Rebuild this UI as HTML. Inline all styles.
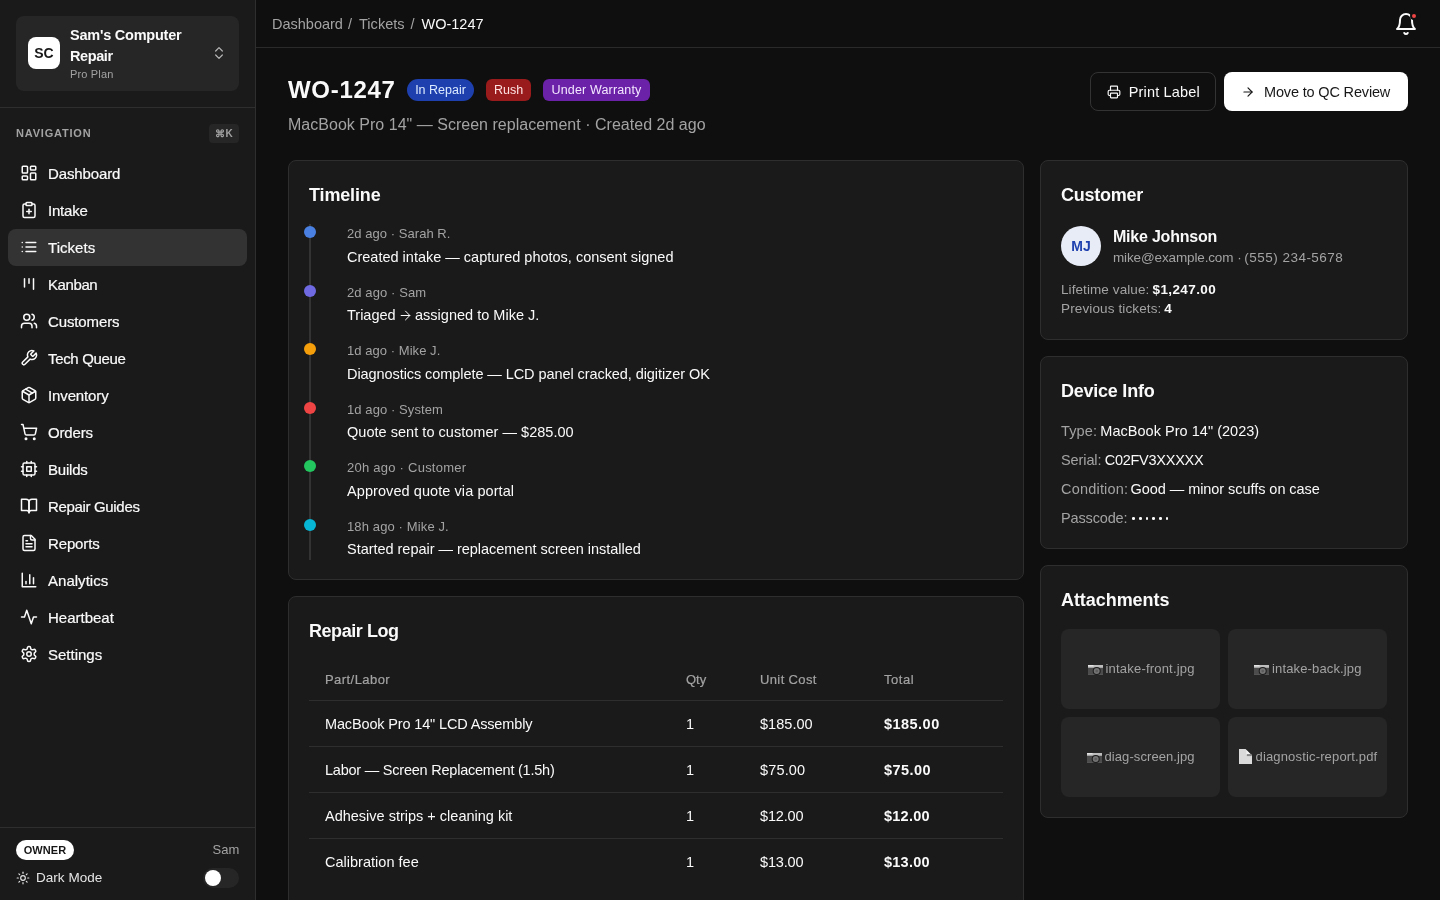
<!DOCTYPE html>
<html lang="en">
<head>
<meta charset="utf-8">
<title>WO-1247</title>
<style>
*{box-sizing:border-box;margin:0;padding:0}
html,body{width:1440px;height:900px;overflow:hidden;background:#0f0f0f;color:#fafafa;
  font-family:"Liberation Sans",sans-serif}
body{position:relative;will-change:transform}
svg{display:block;fill:none;stroke:currentColor;stroke-width:2;stroke-linecap:round;stroke-linejoin:round}
.t{position:absolute;white-space:pre;line-height:20px}
.box{position:absolute}
.ic{position:absolute}
/* colours */
.mu{color:#a3a3a3}
.fg{color:#fafafa}
/* sidebar */
#sb{left:0;top:0;width:256px;height:900px;background:#1a1a1a;border-right:1px solid #2e2e2e}
#org{left:16px;top:16px;width:223px;height:75px;background:#262626;border-radius:8px}
#logo{left:28px;top:37px;width:32px;height:32px;background:#fff;border-radius:8px}
.hl{height:1px;background:#2e2e2e}
#kbd{left:209px;top:124px;width:30px;height:19px;border-radius:4px;background:#262626}
#navon{left:8px;top:229px;width:239px;height:37px;border-radius:8px;background:#333}
#owner{left:16px;top:840px;width:58px;height:20px;border-radius:10px;background:#fff}
#tog{left:203px;top:868px;width:36px;height:20px;border-radius:10px;background:#262626}
#knob{left:205px;top:870px;width:16px;height:16px;border-radius:8px;background:#fff}
/* top */
#topline{left:256px;top:47px;width:1184px;height:1px;background:#2a2a2a}
#belldot{left:1410.2px;top:11.8px;width:8px;height:8px;border-radius:4px;background:#ef4444;border:2px solid #0f0f0f}
.bdg{top:79px;height:22px;border-radius:6px}
#btn1{left:1090px;top:72px;width:125.5px;height:38.5px;border:1px solid #333;border-radius:8px}
#btn2{left:1224px;top:72px;width:184px;height:38.5px;border-radius:8px;background:#fff}
/* cards */
.card{background:#1a1a1a;border:1px solid #2e2e2e;border-radius:8px}
.dot{width:12px;height:12px;border-radius:6px;left:304px}
#av{left:1061px;top:226px;width:40px;height:40px;border-radius:20px;background:#e8ecf6}
.tile{width:159px;height:80px;border-radius:8px;background:#262626}
.pd{width:2.6px;height:2.6px;border-radius:50%;background:#fafafa;top:517.3px}
/* text classes */
.nav{font-size:15px;line-height:37px;color:#fafafa;-webkit-text-stroke:.2px #fafafa}
.md{-webkit-text-stroke:.2px currentColor}
.h1{font-size:24px;font-weight:700;line-height:36px}
.ct{font-size:18px;font-weight:700;line-height:24px}
.b{font-weight:700}
</style>
</head>
<body>
<div class="box" id="sb"></div>
<div class="box" id="org"></div><div class="box" id="logo"></div>
<svg class="ic" style="left:211px;top:45px;width:16px;height:16px;color:#b8b8b8;stroke-width:1.8" viewBox="0 0 24 24"><path d="m7 15 5 5 5-5"/><path d="m7 9 5-5 5 5"/></svg>
<div class="box hl" style="left:0;top:107px;width:255px"></div>
<div class="box" id="kbd"></div>
<div class="box" id="navon"></div>
<svg class="ic" style="left:20px;top:164px;width:18px;height:18px;color:#fafafa;stroke-width:2" viewBox="0 0 24 24"><rect width="7" height="9" x="3" y="3" rx="1"/><rect width="7" height="5" x="14" y="3" rx="1"/><rect width="7" height="9" x="14" y="12" rx="1"/><rect width="7" height="5" x="3" y="16" rx="1"/></svg>
<svg class="ic" style="left:20px;top:201px;width:18px;height:18px;color:#fafafa;stroke-width:2" viewBox="0 0 24 24"><rect width="8" height="4" x="8" y="2" rx="1" ry="1"/><path d="M16 4h2a2 2 0 0 1 2 2v14a2 2 0 0 1-2 2H6a2 2 0 0 1-2-2V6a2 2 0 0 1 2-2h2"/><path d="M9 14h6"/><path d="M12 17v-6"/></svg>
<svg class="ic" style="left:20px;top:238px;width:18px;height:18px;color:#fafafa;stroke-width:2" viewBox="0 0 24 24"><path d="M8 6h13"/><path d="M8 12h13"/><path d="M8 18h13"/><path d="M3 6h.01"/><path d="M3 12h.01"/><path d="M3 18h.01"/></svg>
<svg class="ic" style="left:20px;top:275px;width:18px;height:18px;color:#fafafa;stroke-width:2" viewBox="0 0 24 24"><path d="M6 5v11"/><path d="M12 5v6"/><path d="M18 5v14"/></svg>
<svg class="ic" style="left:20px;top:312px;width:18px;height:18px;color:#fafafa;stroke-width:2" viewBox="0 0 24 24"><path d="M16 21v-2a4 4 0 0 0-4-4H6a4 4 0 0 0-4 4v2"/><circle cx="9" cy="7" r="4"/><path d="M22 21v-2a4 4 0 0 0-3-3.87"/><path d="M16 3.13a4 4 0 0 1 0 7.75"/></svg>
<svg class="ic" style="left:20px;top:349px;width:18px;height:18px;color:#fafafa;stroke-width:2" viewBox="0 0 24 24"><path d="M14.7 6.3a1 1 0 0 0 0 1.4l1.6 1.6a1 1 0 0 0 1.4 0l3.77-3.77a6 6 0 0 1-7.94 7.94l-6.91 6.91a2.12 2.12 0 0 1-3-3l6.91-6.91a6 6 0 0 1 7.94-7.94l-3.76 3.76z"/></svg>
<svg class="ic" style="left:20px;top:386px;width:18px;height:18px;color:#fafafa;stroke-width:2" viewBox="0 0 24 24"><path d="m7.5 4.27 9 5.15"/><path d="M21 8a2 2 0 0 0-1-1.73l-7-4a2 2 0 0 0-2 0l-7 4A2 2 0 0 0 3 8v8a2 2 0 0 0 1 1.73l7 4a2 2 0 0 0 2 0l7-4A2 2 0 0 0 21 16Z"/><path d="m3.3 7 8.7 5 8.7-5"/><path d="M12 22V12"/></svg>
<svg class="ic" style="left:20px;top:423px;width:18px;height:18px;color:#fafafa;stroke-width:2" viewBox="0 0 24 24"><circle cx="8" cy="21" r="1"/><circle cx="19" cy="21" r="1"/><path d="M2.05 2.05h2l2.66 12.42a2 2 0 0 0 2 1.58h9.78a2 2 0 0 0 1.95-1.57l1.65-7.43H5.12"/></svg>
<svg class="ic" style="left:20px;top:460px;width:18px;height:18px;color:#fafafa;stroke-width:2" viewBox="0 0 24 24"><rect x="4" y="4" width="16" height="16" rx="2"/><rect x="9" y="9" width="6" height="6"/><path d="M15 2v2"/><path d="M15 20v2"/><path d="M2 15h2"/><path d="M2 9h2"/><path d="M20 15h2"/><path d="M20 9h2"/><path d="M9 2v2"/><path d="M9 20v2"/></svg>
<svg class="ic" style="left:20px;top:497px;width:18px;height:18px;color:#fafafa;stroke-width:2" viewBox="0 0 24 24"><path d="M2 3h6a4 4 0 0 1 4 4v14a3 3 0 0 0-3-3H2z"/><path d="M22 3h-6a4 4 0 0 0-4 4v14a3 3 0 0 1 3-3h7z"/></svg>
<svg class="ic" style="left:20px;top:534px;width:18px;height:18px;color:#fafafa;stroke-width:2" viewBox="0 0 24 24"><path d="M15 2H6a2 2 0 0 0-2 2v16a2 2 0 0 0 2 2h12a2 2 0 0 0 2-2V7Z"/><path d="M14 2v4a2 2 0 0 0 2 2h4"/><path d="M10 9H8"/><path d="M16 13H8"/><path d="M16 17H8"/></svg>
<svg class="ic" style="left:20px;top:571px;width:18px;height:18px;color:#fafafa;stroke-width:2" viewBox="0 0 24 24"><path d="M3 3v18h18"/><path d="M18 17V9"/><path d="M13 17V5"/><path d="M8 17v-3"/></svg>
<svg class="ic" style="left:20px;top:608px;width:18px;height:18px;color:#fafafa;stroke-width:2" viewBox="0 0 24 24"><path d="M22 12h-4l-3 9L9 3l-3 9H2"/></svg>
<svg class="ic" style="left:20px;top:645px;width:18px;height:18px;color:#fafafa;stroke-width:2" viewBox="0 0 24 24"><path d="M12.22 2h-.44a2 2 0 0 0-2 2v.18a2 2 0 0 1-1 1.73l-.43.25a2 2 0 0 1-2 0l-.15-.08a2 2 0 0 0-2.73.73l-.22.38a2 2 0 0 0 .73 2.73l.15.1a2 2 0 0 1 1 1.72v.51a2 2 0 0 1-1 1.74l-.15.09a2 2 0 0 0-.73 2.73l.22.38a2 2 0 0 0 2.73.73l.15-.08a2 2 0 0 1 2 0l.43.25a2 2 0 0 1 1 1.73V20a2 2 0 0 0 2 2h.44a2 2 0 0 0 2-2v-.18a2 2 0 0 1 1-1.73l.43-.25a2 2 0 0 1 2 0l.15.08a2 2 0 0 0 2.73-.73l.22-.39a2 2 0 0 0-.73-2.73l-.15-.08a2 2 0 0 1-1-1.74v-.5a2 2 0 0 1 1-1.74l.15-.09a2 2 0 0 0 .73-2.73l-.22-.38a2 2 0 0 0-2.73-.73l-.15.08a2 2 0 0 1-2 0l-.43-.25a2 2 0 0 1-1-1.73V4a2 2 0 0 0-2-2z"/><circle cx="12" cy="12" r="3"/></svg>
<div class="box hl" style="left:0;top:827px;width:255px"></div>
<div class="box" id="owner"></div>
<svg class="ic" style="left:16px;top:871px;width:14px;height:14px;color:#e5e5e5;stroke-width:2" viewBox="0 0 24 24"><circle cx="12" cy="12" r="4"/><path d="M12 2v2"/><path d="M12 20v2"/><path d="m4.93 4.93 1.41 1.41"/><path d="m17.66 17.66 1.41 1.41"/><path d="M2 12h2"/><path d="M20 12h2"/><path d="m6.34 17.66-1.41 1.41"/><path d="m19.07 4.93-1.41 1.41"/></svg>
<div class="box" id="tog"></div><div class="box" id="knob"></div>
<div class="box" id="topline"></div>
<svg class="ic" style="left:1394.4px;top:11.6px;width:24px;height:24px;color:#fafafa;stroke-width:2" viewBox="0 0 24 24"><path d="M6 8a6 6 0 0 1 12 0c0 7 3 9 3 9H3s3-2 3-9"/><path d="M10.3 21a1.94 1.94 0 0 0 3.4 0"/></svg>
<div class="box" id="belldot"></div>
<div class="box bdg" style="left:407px;width:67px;background:#1e40af;border-radius:11px"></div>
<div class="box bdg" style="left:486px;width:45px;background:#991b1b"></div>
<div class="box bdg" style="left:543px;width:107px;background:#6b21a8"></div>
<div class="box" id="btn1"></div><div class="box" id="btn2"></div>
<svg class="ic" style="left:1107px;top:84.6px;width:14px;height:14px;color:#fafafa;stroke-width:2" viewBox="0 0 24 24"><path d="M6 18H4a2 2 0 0 1-2-2v-5a2 2 0 0 1 2-2h16a2 2 0 0 1 2 2v5a2 2 0 0 1-2 2h-2"/><path d="M6 9V3a1 1 0 0 1 1-1h10a1 1 0 0 1 1 1v6"/><rect x="6" y="14" width="12" height="8" rx="1"/></svg>
<svg class="ic" style="left:1241px;top:84.6px;width:14px;height:14px;color:#171717;stroke-width:2" viewBox="0 0 24 24"><path d="M5 12h14"/><path d="m12 5 7 7-7 7"/></svg>
<div class="box card" style="left:288px;top:160px;width:736px;height:420px"></div>
<div class="box card" style="left:288px;top:596px;width:736px;height:340px"></div>
<div class="box card" style="left:1040px;top:160px;width:368px;height:180px"></div>
<div class="box card" style="left:1040px;top:356px;width:368px;height:193px"></div>
<div class="box card" style="left:1040px;top:565px;width:368px;height:253px"></div>
<div class="box" style="left:309px;top:224px;width:2px;height:336px;background:#333"></div>
<div class="box dot" style="top:226px;background:#4a80e2"></div>
<div class="box dot" style="top:285px;background:#6f69e2"></div>
<div class="box dot" style="top:343px;background:#f59e0b"></div>
<div class="box dot" style="top:402px;background:#ef4444"></div>
<div class="box dot" style="top:460px;background:#22c55e"></div>
<div class="box dot" style="top:519px;background:#06b6d4"></div>
<svg class="ic" style="left:398.2px;top:307.6px;width:15px;height:15px;color:#fafafa;stroke-width:1.6" viewBox="0 0 24 24"><path d="M5 12h14"/><path d="m12 5 7 7-7 7"/></svg>
<div class="box hl" style="left:309px;top:700px;width:694px"></div>
<div class="box hl" style="left:309px;top:746px;width:694px"></div>
<div class="box hl" style="left:309px;top:792px;width:694px"></div>
<div class="box hl" style="left:309px;top:838px;width:694px"></div>
<div class="box" id="av"></div>
<div class="box pd" style="left:1132.3px"></div>
<div class="box pd" style="left:1139.0px"></div>
<div class="box pd" style="left:1145.7px"></div>
<div class="box pd" style="left:1152.4px"></div>
<div class="box pd" style="left:1159.1px"></div>
<div class="box pd" style="left:1165.8px"></div>
<div class="box tile" style="left:1061px;top:629px"></div>
<div class="box tile" style="left:1061px;top:717px"></div>
<div class="box tile" style="left:1228px;top:629px"></div>
<div class="box tile" style="left:1228px;top:717px"></div>
<svg class="ic" style="left:1088px;top:664.5px;stroke:none" width="15" height="10.5" viewBox="0 0 15 10.5"><rect x="0" y="0" width="15" height="2.9" fill="#bdbdbd"/><rect x="0" y="0" width="5.5" height="1.4" fill="#e4e4e4"/><rect x="0" y="2.9" width="15" height="7.6" fill="#4c4c4c"/><rect x="0" y="9.7" width="15" height=".8" fill="#6a6a6a"/><circle cx="8.7" cy="6" r="4" fill="#1b1b1b"/><circle cx="8.7" cy="6" r="3" fill="#747474"/><circle cx="8.7" cy="6.1" r="1.3" fill="#5c5c5c"/></svg>
<svg class="ic" style="left:1254px;top:664.5px;stroke:none" width="15" height="10.5" viewBox="0 0 15 10.5"><rect x="0" y="0" width="15" height="2.9" fill="#bdbdbd"/><rect x="0" y="0" width="5.5" height="1.4" fill="#e4e4e4"/><rect x="0" y="2.9" width="15" height="7.6" fill="#4c4c4c"/><rect x="0" y="9.7" width="15" height=".8" fill="#6a6a6a"/><circle cx="8.7" cy="6" r="4" fill="#1b1b1b"/><circle cx="8.7" cy="6" r="3" fill="#747474"/><circle cx="8.7" cy="6.1" r="1.3" fill="#5c5c5c"/></svg>
<svg class="ic" style="left:1087px;top:752.5px;stroke:none" width="15" height="10.5" viewBox="0 0 15 10.5"><rect x="0" y="0" width="15" height="2.9" fill="#bdbdbd"/><rect x="0" y="0" width="5.5" height="1.4" fill="#e4e4e4"/><rect x="0" y="2.9" width="15" height="7.6" fill="#4c4c4c"/><rect x="0" y="9.7" width="15" height=".8" fill="#6a6a6a"/><circle cx="8.7" cy="6" r="4" fill="#1b1b1b"/><circle cx="8.7" cy="6" r="3" fill="#747474"/><circle cx="8.7" cy="6.1" r="1.3" fill="#5c5c5c"/></svg>
<svg class="ic" style="left:1239px;top:749px;stroke:none" width="13" height="15" viewBox="0 0 13 15"><path d="M0 0H6.6L13 6.4V15H0z" fill="#dadada"/><path d="M7.4 1.1L12.6 6.3H7.4z" fill="#f2f2f2"/><rect x="7.8" y="5.1" width="4.8" height="2" fill="#858585"/></svg>
<div class="t b" style="left:28px;top:37px;width:32px;text-align:center;font-size:14px;line-height:32px;color:#171717">SC</div>
<div class="t b fg" style="left:70px;top:25px;font-size:14.5px;line-height:21px;letter-spacing:-0.231px">Sam's Computer</div>
<div class="t b fg" style="left:70px;top:46px;font-size:14.5px;line-height:21px;letter-spacing:-0.400px">Repair</div>
<div class="t mu" style="left:70px;top:67px;font-size:11px;line-height:14px;letter-spacing:0.171px">Pro Plan</div>
<div class="t b mu" style="left:16px;top:126px;font-size:11px;line-height:14px;letter-spacing:0.800px">NAVIGATION</div>
<div class="t b mu" style="left:209px;top:124px;width:30px;text-align:center;font-size:10px;line-height:19px;letter-spacing:.3px">⌘K</div>
<div class="t nav" style="left:48px;top:155px;letter-spacing:-0.125px">Dashboard</div>
<div class="t nav" style="left:48px;top:192px;letter-spacing:-0.200px">Intake</div>
<div class="t nav" style="left:48px;top:229px;letter-spacing:0.033px">Tickets</div>
<div class="t nav" style="left:48px;top:266px;letter-spacing:-0.400px">Kanban</div>
<div class="t nav" style="left:48px;top:303px;letter-spacing:-0.125px">Customers</div>
<div class="t nav" style="left:48px;top:340px;letter-spacing:-0.333px">Tech Queue</div>
<div class="t nav" style="left:48px;top:377px;letter-spacing:-0.125px">Inventory</div>
<div class="t nav" style="left:48px;top:414px;letter-spacing:-0.160px">Orders</div>
<div class="t nav" style="left:48px;top:451px;letter-spacing:-0.200px">Builds</div>
<div class="t nav" style="left:48px;top:488px;letter-spacing:-0.333px">Repair Guides</div>
<div class="t nav" style="left:48px;top:525px;letter-spacing:-0.133px">Reports</div>
<div class="t nav" style="left:48px;top:562px;letter-spacing:0.025px">Analytics</div>
<div class="t nav" style="left:48px;top:599px">Heartbeat</div>
<div class="t nav" style="left:48px;top:636px">Settings</div>
<div class="t b" style="left:16px;top:840px;width:58px;text-align:center;font-size:11px;line-height:20px;color:#171717;letter-spacing:.1px">OWNER</div>
<div class="t mu" style="left:212.5px;top:841px;font-size:13px;line-height:18px;letter-spacing:0.100px">Sam</div>
<div class="t " style="left:36px;top:869px;font-size:13.5px;line-height:18px;color:#e5e5e5;letter-spacing:0.025px">Dark Mode</div>
<div class="t mu" style="left:272px;top:14px;font-size:14.5px;line-height:20px">Dashboard</div>
<div class="t mu" style="left:348px;top:14px;font-size:14.5px;line-height:20px">/</div>
<div class="t mu" style="left:359px;top:14px;font-size:14.5px;line-height:20px;letter-spacing:0.033px">Tickets</div>
<div class="t mu" style="left:410.5px;top:14px;font-size:14.5px;line-height:20px">/</div>
<div class="t fg" style="left:421.5px;top:14px;font-size:14.5px;line-height:20px">WO-1247</div>
<div class="t h1" style="left:288px;top:72px;letter-spacing:0.700px">WO-1247</div>
<div class="t " style="left:407px;top:79px;font-size:12.5px;line-height:22px;text-align:center;width:67px;color:#dbeafe">In Repair</div>
<div class="t " style="left:486px;top:79px;font-size:12.5px;line-height:22px;text-align:center;width:45px;color:#fee2e2">Rush</div>
<div class="t " style="left:543px;top:79px;font-size:12.5px;line-height:22px;text-align:center;width:107px;letter-spacing:.15px;color:#f3e8ff">Under Warranty</div>
<div class="t mu" style="left:288px;top:114px;font-size:16px;line-height:22px;letter-spacing:0.019px">MacBook Pro 14" — Screen replacement · Created 2d ago</div>
<div class="t fg" style="left:1128.7px;top:73px;font-size:14.5px;line-height:38px;letter-spacing:0.180px">Print Label</div>
<div class="t " style="left:1264px;top:73px;font-size:14.5px;line-height:38px;color:#171717;letter-spacing:-0.163px">Move to QC Review</div>
<div class="t ct" style="left:309px;top:183px;letter-spacing:-0.143px">Timeline</div>
<div class="t mu" style="left:347px;top:225px;font-size:13px;line-height:18px;letter-spacing:0.050px">2d ago · Sarah R.</div>
<div class="t fg" style="left:347px;top:247px;font-size:14.5px;line-height:20px">Created intake — captured photos, consent signed</div>
<div class="t mu" style="left:347px;top:284px;font-size:13px;line-height:18px;letter-spacing:0.091px">2d ago · Sam</div>
<div class="t mu" style="left:347px;top:342px;font-size:13px;line-height:18px;letter-spacing:0.053px">1d ago · Mike J.</div>
<div class="t fg" style="left:347px;top:364px;font-size:14.5px;line-height:20px;letter-spacing:-0.072px">Diagnostics complete — LCD panel cracked, digitizer OK</div>
<div class="t mu" style="left:347px;top:401px;font-size:13px;line-height:18px;letter-spacing:0.086px">1d ago · System</div>
<div class="t fg" style="left:347px;top:422px;font-size:14.5px;line-height:20px;letter-spacing:0.032px">Quote sent to customer — $285.00</div>
<div class="t mu" style="left:347px;top:459px;font-size:13px;line-height:18px;letter-spacing:0.247px">20h ago · Customer</div>
<div class="t fg" style="left:347px;top:481px;font-size:14.5px;line-height:20px;letter-spacing:0.075px">Approved quote via portal</div>
<div class="t mu" style="left:347px;top:518px;font-size:13px;line-height:18px;letter-spacing:0.125px">18h ago · Mike J.</div>
<div class="t fg" style="left:347px;top:539px;font-size:14.5px;line-height:20px;letter-spacing:-0.027px">Started repair — replacement screen installed</div>
<div class="t fg" style="left:347px;top:305px;font-size:14.5px;line-height:20px">Triaged</div>
<div class="t fg" style="left:415px;top:305px;font-size:14.5px;line-height:20px;letter-spacing:0.011px">assigned to Mike J.</div>
<div class="t ct" style="left:309px;top:619px;letter-spacing:-0.444px">Repair Log</div>
<div class="t mu md" style="left:325px;top:671px;font-size:13px;line-height:18px;letter-spacing:0.444px">Part/Labor</div>
<div class="t mu md" style="left:686px;top:671px;font-size:13px;line-height:18px">Qty</div>
<div class="t mu md" style="left:760px;top:671px;font-size:13px;line-height:18px;letter-spacing:0.375px">Unit Cost</div>
<div class="t mu md" style="left:884px;top:671px;font-size:13px;line-height:18px;letter-spacing:0.550px">Total</div>
<div class="t fg" style="left:325px;top:714px;font-size:14.5px;line-height:20px;letter-spacing:-0.148px">MacBook Pro 14" LCD Assembly</div>
<div class="t fg" style="left:686px;top:714px;font-size:14.5px;line-height:20px">1</div>
<div class="t fg" style="left:760px;top:714px;font-size:14.5px;line-height:20px;letter-spacing:0.033px">$185.00</div>
<div class="t b fg" style="left:884px;top:714px;font-size:14.5px;line-height:20px;letter-spacing:0.467px">$185.00</div>
<div class="t fg" style="left:325px;top:760px;font-size:14.5px;line-height:20px;letter-spacing:-0.225px">Labor — Screen Replacement (1.5h)</div>
<div class="t fg" style="left:686px;top:760px;font-size:14.5px;line-height:20px">1</div>
<div class="t fg" style="left:760px;top:760px;font-size:14.5px;line-height:20px;letter-spacing:0.160px">$75.00</div>
<div class="t b fg" style="left:884px;top:760px;font-size:14.5px;line-height:20px;letter-spacing:0.440px">$75.00</div>
<div class="t fg" style="left:325px;top:806px;font-size:14.5px;line-height:20px">Adhesive strips + cleaning kit</div>
<div class="t fg" style="left:686px;top:806px;font-size:14.5px;line-height:20px">1</div>
<div class="t fg" style="left:760px;top:806px;font-size:14.5px;line-height:20px;letter-spacing:-0.160px">$12.00</div>
<div class="t b fg" style="left:884px;top:806px;font-size:14.5px;line-height:20px;letter-spacing:0.240px">$12.00</div>
<div class="t fg" style="left:325px;top:852px;font-size:14.5px;line-height:20px;letter-spacing:0.014px">Calibration fee</div>
<div class="t fg" style="left:686px;top:852px;font-size:14.5px;line-height:20px">1</div>
<div class="t fg" style="left:760px;top:852px;font-size:14.5px;line-height:20px;letter-spacing:-0.160px">$13.00</div>
<div class="t b fg" style="left:884px;top:852px;font-size:14.5px;line-height:20px;letter-spacing:0.240px">$13.00</div>
<div class="t ct" style="left:1061px;top:183px;letter-spacing:-0.257px">Customer</div>
<div class="t b" style="left:1061px;top:226px;width:40px;text-align:center;font-size:14px;line-height:40px;color:#1e40af">MJ</div>
<div class="t b fg" style="left:1113px;top:226px;font-size:16px;line-height:22px;letter-spacing:-0.218px">Mike Johnson</div>
<div class="t mu" style="left:1113px;top:249px;font-size:13.5px;line-height:18px;letter-spacing:-0.133px">mike@example.com</div>
<div class="t mu" style="left:1237.3px;top:249px;font-size:13.5px;line-height:18px">·</div>
<div class="t mu" style="left:1244.3px;top:249px;font-size:13.5px;line-height:18px;letter-spacing:0.477px">(555) 234-5678</div>
<div class="t mu" style="left:1061px;top:281px;font-size:13.5px;line-height:18px;letter-spacing:0.086px">Lifetime value:</div>
<div class="t b fg" style="left:1152.5px;top:281px;font-size:13.5px;line-height:18px;letter-spacing:0.400px">$1,247.00</div>
<div class="t mu" style="left:1061px;top:300px;font-size:13.5px;line-height:18px;letter-spacing:0.125px">Previous tickets:</div>
<div class="t b fg" style="left:1164.2px;top:300px;font-size:13.5px;line-height:18px">4</div>
<div class="t ct" style="left:1061px;top:379px;letter-spacing:-0.240px">Device Info</div>
<div class="t mu" style="left:1061px;top:421px;font-size:14.5px;line-height:20px;letter-spacing:0.150px">Type:</div>
<div class="t fg" style="left:1100.3px;top:421px;font-size:14.5px;line-height:20px;letter-spacing:0.029px">MacBook Pro 14" (2023)</div>
<div class="t mu" style="left:1061px;top:450px;font-size:14.5px;line-height:20px;letter-spacing:-0.100px">Serial:</div>
<div class="t fg" style="left:1104.7px;top:450px;font-size:14.5px;line-height:20px;letter-spacing:-0.260px">C02FV3XXXXX</div>
<div class="t mu" style="left:1061px;top:479px;font-size:14.5px;line-height:20px;letter-spacing:0.200px">Condition:</div>
<div class="t fg" style="left:1130.5px;top:479px;font-size:14.5px;line-height:20px;letter-spacing:-0.054px">Good — minor scuffs on case</div>
<div class="t mu" style="left:1061px;top:508px;font-size:14.5px;line-height:20px;letter-spacing:-0.150px">Passcode:</div>
<div class="t ct" style="left:1061px;top:588px;letter-spacing:-0.060px">Attachments</div>
<div class="t mu" style="left:1105.5px;top:661px;font-size:13px;line-height:16px;letter-spacing:0.200px">intake-front.jpg</div>
<div class="t mu" style="left:1272.0px;top:661px;font-size:13px;line-height:16px;letter-spacing:0.143px">intake-back.jpg</div>
<div class="t mu" style="left:1104.5px;top:749px;font-size:13px;line-height:16px;letter-spacing:0.086px">diag-screen.jpg</div>
<div class="t mu" style="left:1255.5px;top:749px;font-size:13px;line-height:16px;letter-spacing:0.160px">diagnostic-report.pdf</div>
</body>
</html>
